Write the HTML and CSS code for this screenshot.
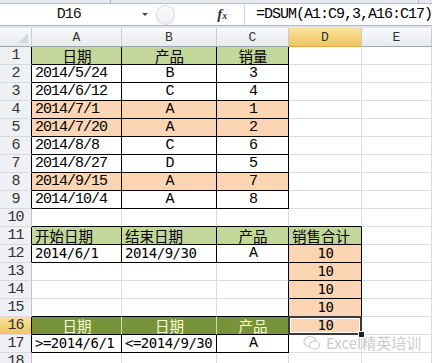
FILE: index.html
```html
<!DOCTYPE html>
<html lang="zh-CN">
<head>
  <meta charset="UTF-8">
  <meta name="viewport" content="width=device-width, initial-scale=1.0">
  <title>DSUM</title>
  <link rel="stylesheet" href="styles.css">
</head>
<body>
  <div class="ribbon"><span class="tick t1"></span><span class="tick t2"></span></div>
  <div class="fbar">
    <div class="namebox">D16</div>
    <div class="drop"></div>
    <div class="knob"></div>
    <div class="fx"><i>f</i><i class="x">x</i></div>
    <div class="formula">=DSUM(A1:C9,3,A16:C17)</div>
  </div>
  <div class="gap"></div>

  <div class="sheet">
    <!-- column headers -->
    <div class="ch corner"><svg width="10" height="10" viewBox="0 0 10 10"><path d="M10 0 L10 10 L0 10 Z" fill="#d5d9de"/></svg></div>
    <div class="ch">A</div>
    <div class="ch">B</div>
    <div class="ch">C</div>
    <div class="ch sel">D</div>
    <div class="ch">E</div>

    <!-- row 1 -->
    <div class="rh r">1</div>
    <div class="c g r b ctr zh">日期</div>
    <div class="c g r b ctr zh">产品</div>
    <div class="c g r b ctr zh">销量</div>
    <div class="c"></div>
    <div class="c"></div>

    <div class="rh r">2</div>
    <div class="c r b">2014/5/24</div>
    <div class="c r b ctr">B</div>
    <div class="c r b ctr">3</div>
    <div class="c"></div>
    <div class="c"></div>

    <div class="rh r">3</div>
    <div class="c r b">2014/6/12</div>
    <div class="c r b ctr">C</div>
    <div class="c r b ctr">4</div>
    <div class="c"></div>
    <div class="c"></div>

    <div class="rh r">4</div>
    <div class="c o r b">2014/7/1</div>
    <div class="c o r b ctr">A</div>
    <div class="c o r b ctr">1</div>
    <div class="c"></div>
    <div class="c"></div>

    <div class="rh r">5</div>
    <div class="c o r b">2014/7/20</div>
    <div class="c o r b ctr">A</div>
    <div class="c o r b ctr">2</div>
    <div class="c"></div>
    <div class="c"></div>

    <div class="rh r">6</div>
    <div class="c r b">2014/8/8</div>
    <div class="c r b ctr">C</div>
    <div class="c r b ctr">6</div>
    <div class="c"></div>
    <div class="c"></div>

    <div class="rh r">7</div>
    <div class="c r b">2014/8/27</div>
    <div class="c r b ctr">D</div>
    <div class="c r b ctr">5</div>
    <div class="c"></div>
    <div class="c"></div>

    <div class="rh r">8</div>
    <div class="c o r b">2014/9/15</div>
    <div class="c o r b ctr">A</div>
    <div class="c o r b ctr">7</div>
    <div class="c"></div>
    <div class="c"></div>

    <div class="rh r">9</div>
    <div class="c r b">2014/10/4</div>
    <div class="c r b ctr">A</div>
    <div class="c r b ctr">8</div>
    <div class="c"></div>
    <div class="c"></div>

    <div class="rh">10</div>
    <div class="c b"></div>
    <div class="c b"></div>
    <div class="c b"></div>
    <div class="c b"></div>
    <div class="c"></div>

    <!-- criteria block -->
    <div class="rh r">11</div>
    <div class="c g r b zh">开始日期</div>
    <div class="c g r b zh">结束日期</div>
    <div class="c g r b ctr zh">产品</div>
    <div class="c g r b zh">销售合计</div>
    <div class="c"></div>

    <div class="rh r">12</div>
    <div class="c r b sans">2014/6/1</div>
    <div class="c r b sans">2014/9/30</div>
    <div class="c r b ctr">A</div>
    <div class="c o r b ctr sans">10</div>
    <div class="c"></div>

    <div class="rh">13</div>
    <div class="c"></div>
    <div class="c"></div>
    <div class="c r"></div>
    <div class="c o r b ctr sans">10</div>
    <div class="c"></div>

    <div class="rh">14</div>
    <div class="c"></div>
    <div class="c"></div>
    <div class="c r"></div>
    <div class="c o r b ctr sans">10</div>
    <div class="c"></div>

    <div class="rh">15</div>
    <div class="c b"></div>
    <div class="c b"></div>
    <div class="c r b"></div>
    <div class="c o r b ctr sans">10</div>
    <div class="c"></div>

    <div class="rh sel r">16</div>
    <div class="c dk lr b ctr zh">日期</div>
    <div class="c dk lr b ctr zh">日期</div>
    <div class="c dk r b ctr zh">产品</div>
    <div class="c o r b ctr sans active">10</div>
    <div class="c"></div>

    <div class="rh r">17</div>
    <div class="c r b sans">&gt;=2014/6/1</div>
    <div class="c r b sans">&lt;=2014/9/30</div>
    <div class="c r b ctr">A</div>
    <div class="c"></div>
    <div class="c"></div>

    <div class="rh">18</div>
    <div class="c"></div>
    <div class="c"></div>
    <div class="c"></div>
    <div class="c"></div>
    <div class="c"></div>
  </div>

  <div class="mark">
    <svg width="18" height="16" viewBox="0 0 18 16">
      <ellipse cx="7" cy="6.5" rx="6" ry="5" fill="none" stroke="#c9c9c9" stroke-width="1.2"/>
      <ellipse cx="11.5" cy="10" rx="5" ry="4" fill="#fff" stroke="#c9c9c9" stroke-width="1.2"/>
    </svg>
    <span>Excel精英培训</span>
  </div>
</body>
</html>
```

FILE: styles.css
```css
body {
  margin: 0;
  width: 432px;
  height: 363px;
  overflow: hidden;
  background: #fff;
  position: relative;
  font-family: "Liberation Mono", monospace;
}

/* top bits: ribbon edge + formula bar */
.ribbon {
  height: 3px;
  background: #e6e9ee;
  border-bottom: 1px solid #b8bfc8;
  position: relative;
}
.tick {
  position: absolute;
  top: 0;
  width: 1px;
  height: 3px;
  background: #aab2bc;
}
.t1 { left: 110px; }
.t2 { left: 418px; }

.fbar {
  height: 21px;
  display: flex;
  align-items: center;
  border-bottom: 1px solid #aeb5bf;
  background: #fff;
}
.namebox {
  width: 140px;
  text-align: center;
  font-size: 15px;
  letter-spacing: -1px;
  color: #111;
}
.drop {
  width: 0;
  height: 0;
  border-left: 3px solid transparent;
  border-right: 3px solid transparent;
  border-top: 3px solid #444;
  margin-left: 4px;
}
.knob {
  width: 20px;
  height: 20px;
  margin-left: 8px;
  border-radius: 50%;
  border: 1px solid #d6dbe1;
  background: linear-gradient(#fbfbfc, #eef0f3);
  box-sizing: border-box;
}
.fx {
  margin-left: 42px;
  width: 16px;
  font-family: "Liberation Serif", serif;
  font-weight: bold;
  color: #333;
  font-size: 15px;
}
.fx .x { font-size: 10px; }
.formula {
  margin-left: 11px;
  padding-left: 11px;
  border-left: 1px solid #d0d5dc;
  height: 21px;
  line-height: 21px;
  font-size: 15px;
  letter-spacing: -1px;
  color: #000;
}
.gap {
  height: 2px;
  background: #e2e6eb;
}

/* grid */
.sheet {
  display: grid;
  grid-template-columns: 32px 90px 95px 72px 73px 70px;
  grid-template-rows: 19px repeat(18, 18px);
}
.ch, .rh, .c {
  box-sizing: border-box;
  display: flex;
  align-items: center;
  white-space: nowrap;
}
.ch {
  justify-content: center;
  background: linear-gradient(#f9fafb, #e7eaee);
  border-right: 1px solid #c7ccd3;
  border-bottom: 1px solid #9fa6b0;
  font-size: 13px;
  color: #333;
}
.ch.corner {
  justify-content: flex-end;
  align-items: flex-end;
  padding: 0 3px 3px 0;
}
.ch.sel {
  background: linear-gradient(#f9e29d, #f2c560);
  border-bottom-color: #e2a33c;
}
.rh {
  justify-content: center;
  background: #eef0f3;
  border-right: 1px solid #bfc5cd;
  border-bottom: 1px solid #d6d9de;
  font-size: 15px;
  letter-spacing: -1px;
  color: #333;
}
.rh.sel {
  background: linear-gradient(#f9e29d, #f2c560);
}
.c {
  border-right: 1px solid #dadcdd;
  border-bottom: 1px solid #dadcdd;
  padding: 0 2px 0 3px;
  font-size: 15px;
  line-height: 17px;
  letter-spacing: -1px;
  color: #000;
}
.ctr { justify-content: center; }

.r { border-right-color: #000; }
.b { border-bottom-color: #000; }
.lr { border-right-color: #cfd6bd; }

.g { background: #c4d79b; }
.o { background: #fcd5b4; }
.dk { background: #76933c; color: #fbfbd4; }

.zh {
  font-family: "Noto Sans CJK SC", sans-serif;
  letter-spacing: 0;
  font-size: 14.5px;
  line-height: 17px;
}
.sans {
  font-family: "DejaVu Sans Mono", monospace;
  font-size: 14px;
  letter-spacing: -0.5px;
}

/* active cell D16 */
.active {
  position: relative;
}
.active::after {
  content: "";
  position: absolute;
  left: -1px;
  top: -1px;
  right: -1px;
  bottom: -1px;
  border: 2px solid #3a3a3a;
  box-shadow: inset 0 0 0 1px #fff;
}
.active::before {
  content: "";
  position: absolute;
  right: -4px;
  bottom: -4px;
  width: 5px;
  height: 5px;
  background: #222;
  border: 1px solid #fff;
  z-index: 2;
}

/* watermark */
.mark {
  position: absolute;
  left: 303px;
  top: 334px;
  display: flex;
  align-items: center;
  gap: 5px;
  opacity: 0.9;
}
.mark span {
  font-family: "Noto Sans CJK SC", sans-serif;
  font-size: 15px;
  color: #c6c6c6;
  line-height: 18px;
}
```
